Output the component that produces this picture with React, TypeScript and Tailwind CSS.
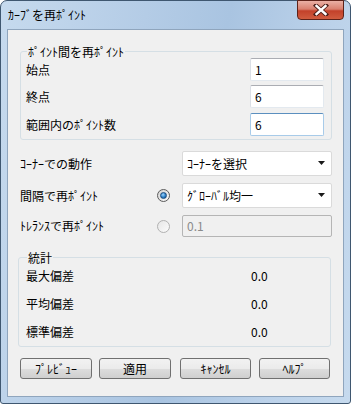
import React from "react";

const jp = "font-['Noto_Sans_CJK_JP','Noto_Sans',sans-serif]";

const TextBox = (props: { value: string; focused?: boolean; disabled?: boolean; w: string; h: string }) => (
  <div
    className={
      `${props.w} ${props.h} flex items-center pl-[4px] text-[12px] border ` +
      (props.disabled
        ? "bg-[#f0f0f0] border-[#b5b5b5] text-[#8a8a8a] rounded-[2px]"
        : props.focused
        ? "bg-white border-[#a8cbe9] border-t-[#5b8fbf] text-black rounded-[2px]"
        : "bg-white border-[#e3e9ef] border-t-[#abadb3] border-l-[#dbdfe6] text-black rounded-[2px]")
    }
  >
    {props.value}
  </div>
);

const Combo = (props: { value: string }) => (
  <div className="w-[150px] h-[25px] flex items-center justify-between bg-white border border-[#dadada] rounded-[2px] pl-[4px] pr-[5px] text-[12px] text-black">
    <span>{props.value}</span>
    <svg width="8" height="5" viewBox="0 0 8 5">
      <path d="M0 0 H7 L3.5 4 Z" fill="#1a1a1a" />
    </svg>
  </div>
);

const Radio = (props: { checked?: boolean }) => (
  <div
    className={
      "w-[13px] h-[13px] rounded-full border flex items-center justify-center " +
      (props.checked
        ? "border-[#5b5b5b] bg-gradient-to-br from-[#d4d4d4] to-[#fafafa]"
        : "border-[#b1b1b1] bg-gradient-to-br from-[#e6e6e6] to-[#fbfbfb]")
    }
  >
    {props.checked && (
      <div className="w-[7px] h-[7px] rounded-full border border-[#1b4d80] bg-[radial-gradient(circle_at_40%_35%,#9fd5ff,#2c7fc6_55%,#104d88)]" />
    )}
  </div>
);

const Btn = (props: { label: string; cls: string }) => (
  <div
    className={`${props.cls} h-[21px] flex items-center justify-center rounded-[3px] border border-[#707070] bg-[linear-gradient(#f2f2f2_0%,#ebebeb_50%,#dddddd_51%,#cfcfcf_100%)] text-[12px] text-black`}
  >
    {props.label}
  </div>
);

const Legend = (props: { text: string }) => (
  <div className="-mt-[7px] ml-[1px] h-[13px] leading-[13px] w-fit bg-[#f0f0f0] px-[1px] text-[12px] text-black">
    {props.text}
  </div>
);

export default function App() {
  return (
    <div className={`w-[351px] h-[404px] ${jp} select-none`}>
      <div className="w-[351px] h-[404px] flex flex-col rounded-t-[7px] rounded-b-[3px] border border-[#3f5770] bg-[linear-gradient(100deg,#c6daee_0%,#b4cce6_35%,#a9c4e1_55%,#bcd2ea_80%,#c6daee_100%)] px-[6px] pb-[6px]">
        {/* title bar */}
        <div className="h-[28px] flex items-start justify-between">
          <div className="h-[28px] flex items-center pl-[1px] text-[12px] text-black">ｶｰﾌﾞを再ﾎﾟｲﾝﾄ</div>
          <div className="-mt-px w-[47px] h-[20px] rounded-b-[4px] border border-[#5e2219] bg-[linear-gradient(#eab0a5_0%,#d9806f_45%,#c3412a_55%,#d05c3f_100%)] flex items-center justify-center">
            <svg width="16" height="12" viewBox="0 0 16 12">
              <path d="M3 1.5 L13 10.5 M13 1.5 L3 10.5" stroke="#4a1d18" strokeWidth="4.2" strokeLinecap="square" />
              <path d="M3.5 2 L12.5 10 M12.5 2 L3.5 10" stroke="#ffffff" strokeWidth="2.4" strokeLinecap="square" />
            </svg>
          </div>
        </div>

        {/* client area */}
        <div className="flex-1 flex flex-col border border-[#8fa5bd] bg-[#f0f0f0] text-black">
          {/* group: points */}
          <div className="mt-[21px] ml-[12px] w-[312px] border border-[#d5dfe5] rounded-[3px] pl-[5px] pr-[7px] pb-[3px]">
            <Legend text="ﾎﾟｲﾝﾄ間を再ﾎﾟｲﾝﾄ" />
            <div className="flex flex-col">
              <div className="flex items-center justify-between h-[23px] text-[12px]">
                <span>始点</span>
                <TextBox value="1" w="w-[74px]" h="h-[23px]" />
              </div>
              <div className="flex items-center justify-between h-[23px] mt-[4px] text-[12px]">
                <span>終点</span>
                <TextBox value="6" w="w-[74px]" h="h-[23px]" />
              </div>
              <div className="flex items-center justify-between h-[23px] mt-[5px] text-[12px]">
                <span>範囲内のﾎﾟｲﾝﾄ数</span>
                <TextBox value="6" focused w="w-[74px]" h="h-[23px]" />
              </div>
            </div>
          </div>

          {/* corner / spacing options */}
          <div className="flex flex-col mt-[11px] pl-[12px] pr-[11px] text-[12px]">
            <div className="flex items-center h-[25px]">
              <span className="w-[137px]">ｺｰﾅｰでの動作</span>
              <div className="ml-auto">
                <Combo value="ｺｰﾅｰを選択" />
              </div>
            </div>
            <div className="flex items-center h-[25px] mt-[7px]">
              <span className="w-[137px]">間隔で再ﾎﾟｲﾝﾄ</span>
              <Radio checked />
              <div className="ml-auto">
                <Combo value="ｸﾞﾛｰﾊﾞﾙ均一" />
              </div>
            </div>
            <div className="flex items-center h-[22px] mt-[7px]">
              <span className="w-[137px]">ﾄﾚﾗﾝｽで再ﾎﾟｲﾝﾄ</span>
              <Radio />
              <div className="ml-auto">
                <TextBox value="0.1" disabled w="w-[150px]" h="h-[22px]" />
              </div>
            </div>
          </div>

          {/* group: statistics */}
          <div className="mt-[20px] ml-[10px] w-[313px] border border-[#d5dfe5] rounded-[3px] pl-[7px]">
            <Legend text="統計" />
            <div className="flex flex-col -mt-[2px] text-[12px]">
              {[
                ["最大偏差", "0.0"],
                ["平均偏差", "0.0"],
                ["標準偏差", "0.0"],
              ].map(([k, v]) => (
                <div key={k} className="flex items-center h-[28px]">
                  <span className="w-[225px]">{k}</span>
                  <span>{v}</span>
                </div>
              ))}
            </div>
          </div>

          {/* buttons */}
          <div className="flex mt-[11px] ml-[12px]">
            <Btn label="ﾌﾟﾚﾋﾞｭｰ" cls="w-[72px]" />
            <Btn label="適用" cls="w-[72px] ml-[7px]" />
            <Btn label="ｷｬﾝｾﾙ" cls="w-[71px] ml-[9px]" />
            <Btn label="ﾍﾙﾌﾟ" cls="w-[71px] ml-[8px]" />
          </div>
        </div>
      </div>
    </div>
  );
}
